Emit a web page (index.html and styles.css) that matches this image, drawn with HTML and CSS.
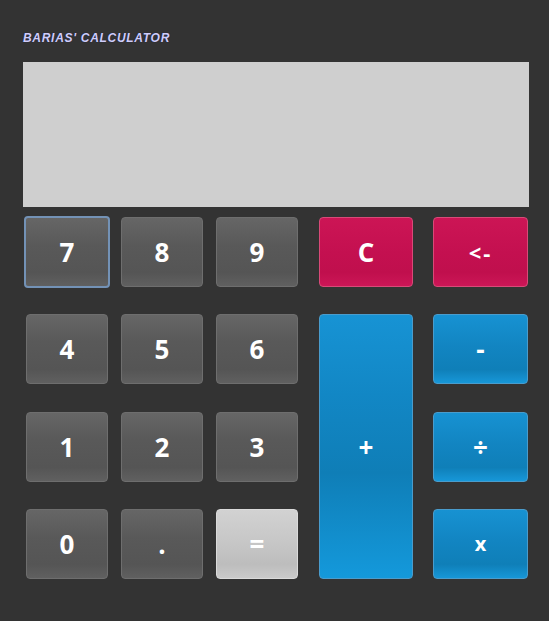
FILE: index.html
```html
<!DOCTYPE html>
<html>
<head>
<meta charset="utf-8">
<link rel="stylesheet" href="styles.css">
</head>
<body>
<div class="calc">
  <h1 class="title">BARIAS' CALCULATOR</h1>
  <div class="display"></div>
  <div class="keys">
    <button class="key num focus">7</button>
    <button class="key num">8</button>
    <button class="key num">9</button>
    <button class="key red c4">C</button>
    <button class="key red c5 back">&lt;-</button>
    <button class="key num">4</button>
    <button class="key num">5</button>
    <button class="key num">6</button>
    <button class="key blue c4 plus">+</button>
    <button class="key blue c5">-</button>
    <button class="key num">1</button>
    <button class="key num">2</button>
    <button class="key num">3</button>
    <button class="key blue c5">÷</button>
    <button class="key num">0</button>
    <button class="key num">.</button>
    <button class="key eq">=</button>
    <button class="key blue c5 times">x</button>
  </div>
</div>
</body>
</html>
```
FILE: styles.css
```css
html, body {
  margin: 0;
  padding: 0;
  background: #333333;
}
body {
  width: 549px;
  height: 621px;
  overflow: hidden;
}
.calc {
  padding: 32px 0 0 23px;
}
.title {
  margin: 0;
  font-family: "Liberation Sans", Arial, sans-serif;
  font-style: italic;
  font-weight: bold;
  font-size: 12px;
  line-height: 13px;
  letter-spacing: 0.7px;
  color: #cfcdfa;
  text-shadow: 0 0 1px #1a1a40;
}
.display {
  margin-top: 17px;
  width: 506px;
  height: 145px;
  background: #cfcfcf;
}
.keys {
  margin-top: 10px;
  margin-left: 3px;
  display: grid;
  grid-template-columns: 82px 82px 82px 102px 102px;
  grid-template-rows: repeat(4, 70px);
  column-gap: 13px;
  row-gap: 27.33px;
}
.key {
  box-sizing: border-box;
  margin: 0;
  padding: 0;
  border-radius: 4px;
  border: 1px solid #6c6c6c;
  font-family: "Open Sans", "DejaVu Sans", sans-serif;
  font-weight: bold;
  font-size: 26px;
  color: #ffffff;
  cursor: pointer;
}
.num {
  background: linear-gradient(#666666 0%, #595959 40%, #555555 80%, #606060 100%);
  border-color: #6e6e6e;
}
.focus {
  margin: -1px -2px -1px -2px;
  border: 2px solid #7392b6;
}
.red {
  background: linear-gradient(#cc1555 0%, #c41050 50%, #c00f4d 80%, #cc1657 100%);
  border-color: #d84a78;
}
.blue {
  background: linear-gradient(#1792d2 0%, #1285c2 45%, #0f7fb8 80%, #1797d8 100%);
  border-color: #4a9ccc;
}
.plus {
  grid-row: 2 / span 3;
  background: linear-gradient(#1793d4 0%, #1287c5 30%, #0f7eb7 60%, #1499db 100%);
}
.eq {
  background: linear-gradient(#d2d2d2 0%, #c6c6c6 50%, #bdbdbd 80%, #cacaca 100%);
  border-color: #dadada;
}
.c4 {
  grid-column: 4;
  justify-self: end;
  width: 94px;
}
.c5 {
  grid-column: 5;
  justify-self: end;
  width: 95px;
}
.back {
  font-size: 22px;
  letter-spacing: 2px;
}
.times {
  font-size: 20px;
}
```
